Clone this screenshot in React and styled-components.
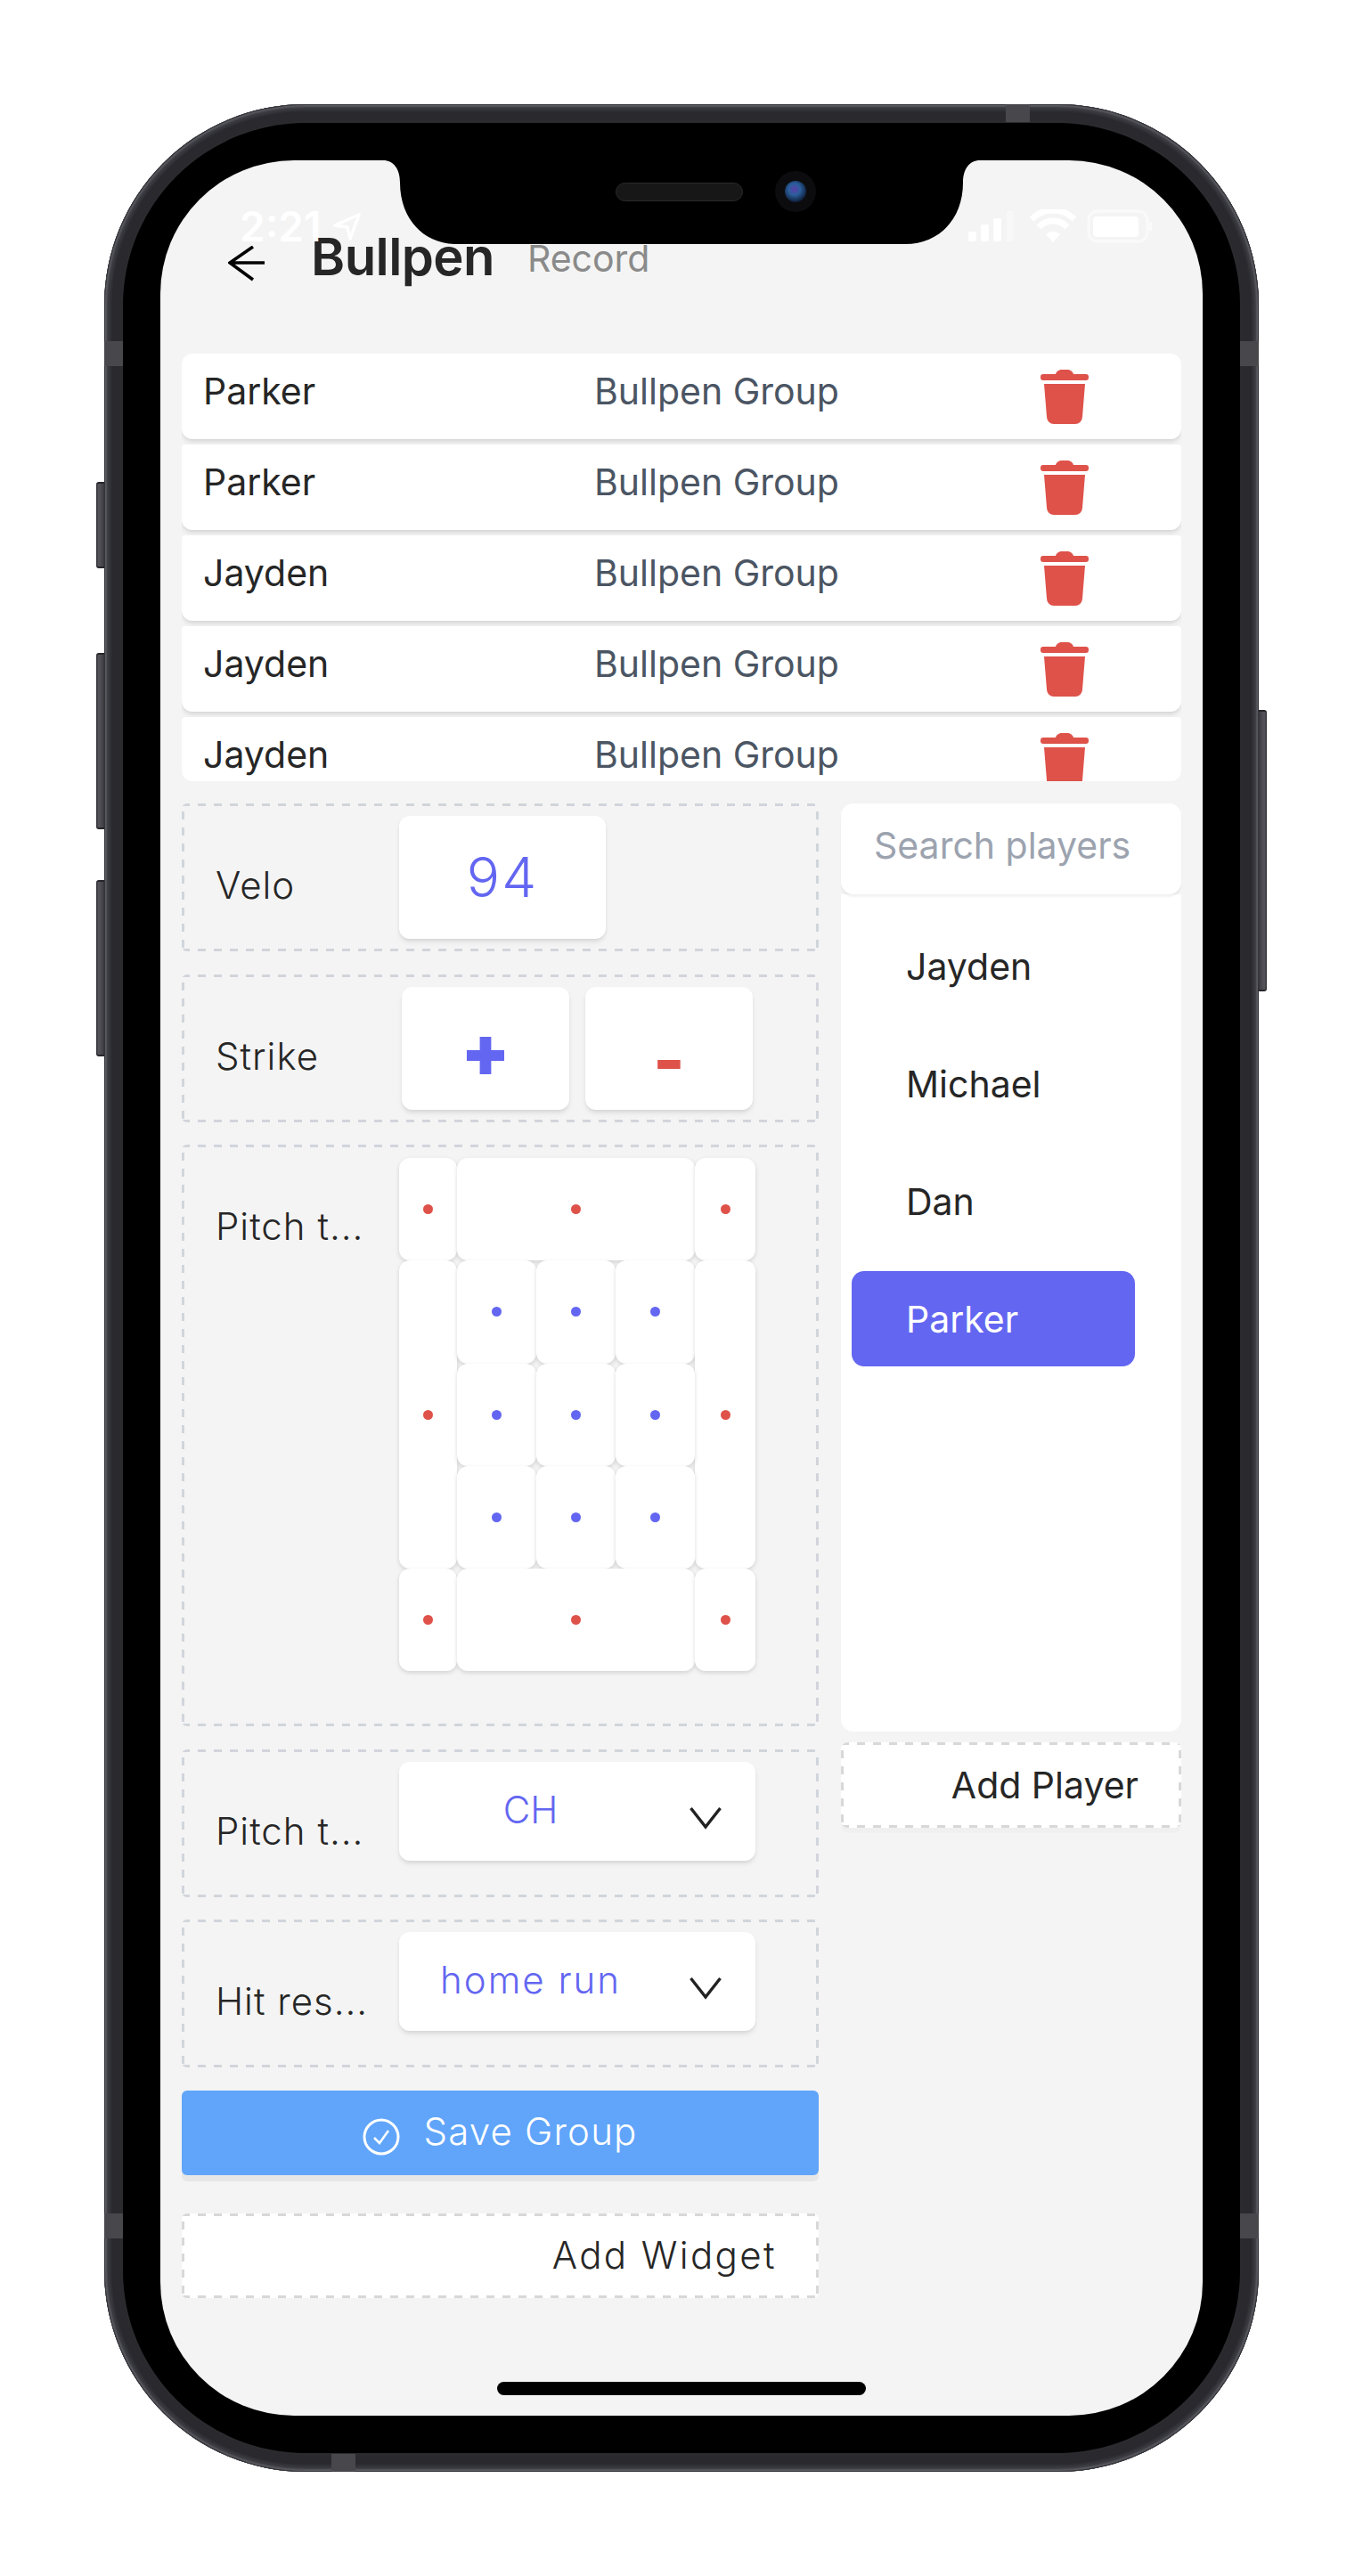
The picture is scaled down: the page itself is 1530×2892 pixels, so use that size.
import React from "react";
import styled, { createGlobalStyle, css } from "styled-components";

const Global = createGlobalStyle`
  html, body { margin: 0; padding: 0; background: #fff; }
  * { box-sizing: border-box; }
  body { font-family: "Inter", "Liberation Sans", sans-serif; color: #262626; }
`;

const dashes = (c) => css`
  background-image:
    linear-gradient(90deg, ${c} 50%, transparent 50%),
    linear-gradient(90deg, ${c} 50%, transparent 50%),
    linear-gradient(0deg, ${c} 50%, transparent 50%),
    linear-gradient(0deg, ${c} 50%, transparent 50%);
  background-size: 18px 3px, 18px 3px, 3px 18px, 3px 18px;
  background-position: 0 0, 0 100%, 0 0, 100% 0;
  background-repeat: repeat-x, repeat-x, repeat-y, repeat-y;
`;

const Page = styled.div`
  width: 1530px;
  padding: 117px 117px;
`;

const Frame = styled.div`
  position: relative;
  width: 1296px;
  height: 2658px;
  padding: 21px;
  border-radius: 226px;
  background: #2a2a2f;
  box-shadow:
    inset 0 0 0 1px #343439,
    inset 0 0 2px 3px #5a5a61,
    inset 0 0 3px 7px #3a3a40,
    inset 0 0 0 18px #29292e;
`;

const SideButton = styled.div`
  position: absolute;
  top: ${(p) => p.$top}px;
  height: ${(p) => p.$height}px;
  width: 9px;
  ${(p) => (p.$right ? "left: 1296px; border-radius: 0 3px 3px 0;" : "left: -9px; border-radius: 3px 0 0 3px;")}
  background: linear-gradient(${(p) => (p.$right ? "270deg" : "90deg")}, #2e2e32 0, #55555b 30%, #47474d 70%, #37373c 100%);
  border-top: 2px solid #26262a;
  border-bottom: 2px solid #26262a;
`;

const Band = styled.div`
  position: absolute;
  background: #47474c;
  ${(p) => (p.$horizontal ? "width: 27px; height: 20px;" : "width: 21px; height: 28px;")}
  ${(p) => p.$place}
`;

const Bezel = styled.div`
  width: 100%;
  height: 100%;
  padding: 42px;
  background: #000;
  border-radius: 205px;
`;

const Screen = styled.div`
  position: relative;
  width: 1170px;
  height: 2532px;
  border-radius: 150px;
  overflow: hidden;
  background: #f4f4f4;
`;

const NotchArt = styled.svg`
  position: absolute;
  left: 0;
  top: 0;
  z-index: 5;
`;

const StatusBar = styled.div`
  position: absolute;
  left: 89px;
  right: 56px;
  top: 49px;
  height: 50px;
  display: flex;
  justify-content: space-between;
  align-items: center;
  color: #fff;
`;

const StatusLeft = styled.div`
  display: flex;
  align-items: center;
  gap: 14px;
  font: 600 46px/50px "Inter", sans-serif;
`;

const HomeBar = styled.div`
  position: absolute;
  left: 378px;
  bottom: 23px;
  width: 414px;
  height: 15px;
  border-radius: 8px;
  background: #000;
`;

const Header = styled.header`
  display: flex;
  height: 217px;
  padding-left: 76px;
`;

const BackIcon = styled.svg`
  margin-top: 96px;
  flex: none;
`;

const Title = styled.h1`
  margin: 73px 0 0 52px;
  font: 600 58px/70px "Inter", sans-serif;
  color: #262626;
  letter-spacing: -0.6px;
`;

const Subtitle = styled.span`
  margin: 85px 0 0 37px;
  font: 400 41px/50px "Inter", sans-serif;
  color: #8a8a8a;
`;

const List = styled.div`
  margin: 0 24px;
  height: 480px;
  overflow: hidden;
  display: flex;
  flex-direction: column;
  gap: 6px;
  border-radius: 12px;
`;

const GroupRow = styled.div`
  flex: none;
  height: 96px;
  display: grid;
  grid-template-columns: 439px 501px 1fr;
  align-items: center;
  padding-left: 24px;
  background: #fff;
  border-radius: 4px 4px 12px 12px;
  box-shadow: 0 4px 6px -1px rgba(0, 0, 0, 0.1), 0 2px 4px -1px rgba(0, 0, 0, 0.06);
  font: 400 41px/50px "Inter", sans-serif;
`;

const RowName = styled.span`
  color: #262626;
  padding-bottom: 12px;
`;

const RowGroup = styled.span`
  color: #4b5563;
  padding-bottom: 12px;
`;

const Columns = styled.div`
  display: grid;
  grid-template-columns: 715px 382px;
  column-gap: 25px;
  margin: 25px 24px 0;
  align-items: start;
`;

const LeftColumn = styled.div`
  display: flex;
  flex-direction: column;
  gap: 25.6px;
`;

const Widget = styled.section`
  display: flex;
  align-items: flex-start;
  height: ${(p) => p.$height || 166}px;
  padding: 14px 0 0 38px;
  ${dashes("#d1d5db")}
  border-radius: 6px;
`;

const Label = styled.div`
  flex: none;
  width: 206px;
  margin-top: ${(p) => p.$top || 53}px;
  font: 300 42px/50px "Inter", sans-serif;
  letter-spacing: 1px;
  color: #262626;
`;

const ValueBox = styled.div`
  width: 232px;
  height: 138px;
  display: flex;
  align-items: center;
  justify-content: center;
  background: #fff;
  border-radius: 12px;
  box-shadow: 0 4px 6px -1px rgba(0, 0, 0, 0.1), 0 2px 4px -1px rgba(0, 0, 0, 0.06);
  font: 300 62px/70px "Inter", sans-serif;
  letter-spacing: 2px;
  color: #6366f1;
`;

const StrikeButtons = styled.div`
  display: flex;
  gap: 18px;
  margin-left: 3px;
`;

const StrikeButton = styled.button`
  width: 188px;
  height: 138px;
  border: 0;
  display: flex;
  align-items: center;
  justify-content: center;
  background: #fff;
  border-radius: 12px;
  box-shadow: 0 4px 6px -1px rgba(0, 0, 0, 0.1), 0 2px 4px -1px rgba(0, 0, 0, 0.06);
  font: ${(p) => p.$weight} ${(p) => p.$size}px/1 "Inter", sans-serif;
  color: ${(p) => p.$color};
  padding: ${(p) => p.$offset}px 0 0;
`;

const PitchGrid = styled.div`
  display: grid;
  width: 400px;
  margin-top: 1px;
  grid-template-columns: 65px 89px 89px 89px 68px;
  grid-template-rows: repeat(5, 115.2px);
`;

const Zone = styled.div`
  grid-column: ${(p) => p.$col};
  grid-row: ${(p) => p.$row};
  display: flex;
  align-items: center;
  justify-content: center;
  background: #fff;
  border-radius: 12px;
  box-shadow: 0 2px 5px rgba(0, 0, 0, 0.14);
`;

const Dot = styled.span`
  width: 11px;
  height: 11px;
  border-radius: 50%;
  background: ${(p) => (p.$strike ? "#6366f1" : "#de524a")};
`;

const SelectBox = styled.div`
  width: 400px;
  height: 111px;
  display: flex;
  align-items: center;
  background: #fff;
  border-radius: 12px;
  box-shadow: 0 4px 6px -1px rgba(0, 0, 0, 0.1), 0 2px 4px -1px rgba(0, 0, 0, 0.06);
`;

const SelectValue = styled.span`
  width: 295px;
  text-align: center;
  padding-bottom: 3px;
  font: 300 42px/50px "Inter", sans-serif;
  letter-spacing: ${(p) => p.$spacing}px;
  color: #6366f1;
`;

const Chevron = styled.svg`
  margin: 15px 0 0 31px;
  flex: none;
`;

const SaveButton = styled.button`
  height: 95px;
  padding: 0;
  border: 0;
  display: flex;
  align-items: center;
  justify-content: center;
  gap: 26px;
  background: #60a5fa;
  border-radius: 6px;
  box-shadow: 0 7px 0 rgba(0, 0, 0, 0.05);
  color: #fff;
  font: 300 42px/50px "Inter", sans-serif;
  letter-spacing: 1.2px;
`;

const SaveIcon = styled.svg`
  margin-top: 9px;
  flex: none;
`;

const SaveText = styled.span`
  margin-top: -3px;
`;

const AddWidget = styled.div`
  height: 95px;
  margin-top: 17.4px;
  display: flex;
  align-items: center;
  justify-content: flex-end;
  padding-right: 47px;
  background-color: #fff;
  ${dashes("#d8d8d8")}
  border-radius: 6px;
  color: #262626;
  font: 300 42px/50px "Inter", sans-serif;
  letter-spacing: 2.4px;
`;

const AddPlayer = styled.div`
  height: 96px;
  margin-top: 12px;
  display: flex;
  align-items: center;
  justify-content: flex-end;
  padding-right: 48px;
  background-color: #fff;
  ${dashes("#d8d8d8")}
  border-radius: 8px;
  box-shadow: 0 6px 0 rgba(0, 0, 0, 0.015);
  color: #262626;
  font: 400 41px/50px "Inter", sans-serif;
`;

const RightColumn = styled.aside`
  display: flex;
  flex-direction: column;
`;

const Search = styled.div`
  position: relative;
  z-index: 1;
  height: 102px;
  display: flex;
  align-items: center;
  padding: 0 0 8px 37px;
  background: #fff;
  border-radius: 14px;
  box-shadow: 0 3px 2px rgba(0, 0, 0, 0.05);
  color: #9ca3af;
  font: 400 41px/50px "Inter", sans-serif;
`;

const PlayerPanel = styled.div`
  height: 940px;
  padding: 27px 12px 0;
  display: flex;
  flex-direction: column;
  gap: 25px;
  background: #fff;
  border-radius: 0 0 14px 14px;
`;

const PlayerItem = styled.div`
  width: 318px;
  height: 107px;
  display: flex;
  align-items: center;
  padding-left: 61px;
  border-radius: 14px;
  background: ${(p) => (p.$active ? "#6366f1" : "transparent")};
  color: ${(p) => (p.$active ? "#fff" : "#262626")};
  font: 400 41px/50px "Inter", sans-serif;
`;

const Trash = () => (
  <svg width="54" height="61" viewBox="0 0 54 61">
    <path
      fill="#de524a"
      d="M17 5C18 1.500 21 0 24 0h6c3 0 6 1.500 7 5h14a3 3 0 0 1 3 3v1a3 3 0 0 1-3 3H3a3 3 0 0 1-3-3V8a3 3 0 0 1 3-3ZM4 16h46l-3 37a8 8 0 0 1-8 8H15a8 8 0 0 1-8-8Z"
    />
  </svg>
);

const Down = () => (
  <Chevron width="36" height="26" viewBox="0 0 36 26" fill="none">
    <path d="M1.500 2 18 23 34.500 2" stroke="#222" strokeWidth="3.400" />
  </Chevron>
);

const rows = ["Parker", "Parker", "Jayden", "Jayden", "Jayden"];
const zones = [
  { col: "1", row: "1" },
  { col: "2 / span 3", row: "1" },
  { col: "5", row: "1" },
  { col: "1", row: "2 / span 3" },
  { col: "2", row: "2", strike: true },
  { col: "3", row: "2", strike: true },
  { col: "4", row: "2", strike: true },
  { col: "5", row: "2 / span 3" },
  { col: "2", row: "3", strike: true },
  { col: "3", row: "3", strike: true },
  { col: "4", row: "3", strike: true },
  { col: "2", row: "4", strike: true },
  { col: "3", row: "4", strike: true },
  { col: "4", row: "4", strike: true },
  { col: "1", row: "5" },
  { col: "2 / span 3", row: "5" },
  { col: "5", row: "5" },
];
const players = ["Jayden", "Michael", "Dan", "Parker"];

export default function App() {
  return (
    <Page>
      <Global />
      <Frame>
        <SideButton $top={424} $height={97} />
        <SideButton $top={616} $height={198} />
        <SideButton $top={871} $height={198} />
        <SideButton $right $top={680} $height={316} />
        <Band $horizontal $place="left: 1012px; top: 0;" />
        <Band $horizontal $place="left: 255px; bottom: 0;" />
        <Band $place="left: 0; top: 266px;" />
        <Band $place="right: 0; top: 266px;" />
        <Band $place="left: 0; bottom: 262px;" />
        <Band $place="right: 0; bottom: 262px;" />
        <Bezel>
          <Screen>
            <StatusBar>
              <StatusLeft>
                2:21
                <svg width="32" height="32" viewBox="0 0 32 32" fill="none">
                  <path d="M2 15 29 3 19 30 16 17Z" stroke="#fff" strokeWidth="3.500" strokeLinejoin="round" />
                </svg>
              </StatusLeft>
              <svg width="208" height="38" viewBox="0 0 208 38">
                <g fill="#fff">
                  <rect x="1" y="25" width="9" height="11" rx="2" />
                  <rect x="15" y="17" width="9" height="19" rx="2" />
                  <rect x="29" y="10" width="9" height="26" rx="2" />
                </g>
                <rect x="44" y="2" width="8" height="34" rx="2" fill="#fff" opacity="0.4" />
                <path
                  d="M72 11a34 34 0 0 1 48 0M80 20a22 22 0 0 1 32 0"
                  stroke="#fff"
                  strokeWidth="7"
                  fill="none"
                />
                <path d="M88 28a12 12 0 0 1 16 0l-8 9Z" fill="#fff" />
                <rect x="136" y="2" width="66" height="34" rx="10" fill="none" stroke="#fff" strokeOpacity="0.5" strokeWidth="3" />
                <rect x="141" y="8" width="51" height="23" rx="4" fill="#fff" />
                <rect x="204" y="14" width="3" height="10" rx="1.500" fill="#fff" opacity="0.5" />
              </svg>
            </StatusBar>
            <NotchArt width="1170" height="120" viewBox="0 0 1170 120">
              <defs>
                <radialGradient id="lens" cx="45%" cy="40%" r="60%">
                  <stop offset="0" stopColor="#5a3fa8" />
                  <stop offset="45%" stopColor="#2b5e9c" />
                  <stop offset="100%" stopColor="#0e1e38" />
                </radialGradient>
              </defs>
              <path
                fill="#000"
                d="M250 0C262 0 269 10 269 25C269 65 295 94 332 94H836C875 94 901 65 901 25C901 10 908 0 920 0Z"
              />
              <rect x="511.500" y="25.500" width="142" height="20" rx="10" fill="#171717" stroke="#2a2a2a" />
              <circle cx="713" cy="35" r="23" fill="#0c0c0f" />
              <circle cx="713" cy="35" r="12" fill="url(#lens)" />
            </NotchArt>
            <Header>
              <BackIcon width="41" height="40" viewBox="0 0 41 40" fill="none">
                <path d="M41 19H3M28 1 2 19l26 19" stroke="#000" strokeWidth="3.600" />
              </BackIcon>
              <Title>Bullpen</Title>
              <Subtitle>Record</Subtitle>
            </Header>
            <List>
              {rows.map((name, i) => (
                <GroupRow key={i}>
                  <RowName>{name}</RowName>
                  <RowGroup>Bullpen Group</RowGroup>
                  <Trash />
                </GroupRow>
              ))}
            </List>
            <Columns>
              <LeftColumn>
                <Widget>
                  <Label>Velo</Label>
                  <ValueBox>94</ValueBox>
                </Widget>
                <Widget>
                  <Label>Strike</Label>
                  <StrikeButtons>
                    <StrikeButton $size={80} $weight={900} $color="#6366f1" $offset={6}>+</StrikeButton>
                    <StrikeButton $size={76} $weight={800} $color="#de524a" $offset={24}>-</StrikeButton>
                  </StrikeButtons>
                </Widget>
                <Widget $height={653}>
                  <Label>Pitch t...</Label>
                  <PitchGrid>
                    {zones.map((z, i) => (
                      <Zone key={i} $col={z.col} $row={z.row}>
                        <Dot $strike={z.strike} />
                      </Zone>
                    ))}
                  </PitchGrid>
                </Widget>
                <Widget>
                  <Label>Pitch t...</Label>
                  <SelectBox>
                    <SelectValue $spacing={0}>CH</SelectValue>
                    <Down />
                  </SelectBox>
                </Widget>
                <Widget>
                  <Label>Hit res...</Label>
                  <SelectBox>
                    <SelectValue $spacing={2}>home run</SelectValue>
                    <Down />
                  </SelectBox>
                </Widget>
                <SaveButton>
                  <SaveIcon width="42" height="42" viewBox="0 0 42 42" fill="none">
                    <circle cx="21" cy="21" r="19" stroke="#fff" strokeWidth="3" />
                    <path d="M13 22l6 6 10-14" stroke="#fff" strokeWidth="2.500" />
                  </SaveIcon>
                  <SaveText>Save Group</SaveText>
                </SaveButton>
                <AddWidget>Add Widget</AddWidget>
              </LeftColumn>
              <RightColumn>
                <Search>Search players</Search>
                <PlayerPanel>
                  {players.map((p) => (
                    <PlayerItem key={p} $active={p === "Parker"}>{p}</PlayerItem>
                  ))}
                </PlayerPanel>
                <AddPlayer>Add Player</AddPlayer>
              </RightColumn>
            </Columns>
            <HomeBar />
          </Screen>
        </Bezel>
      </Frame>
    </Page>
  );
}
